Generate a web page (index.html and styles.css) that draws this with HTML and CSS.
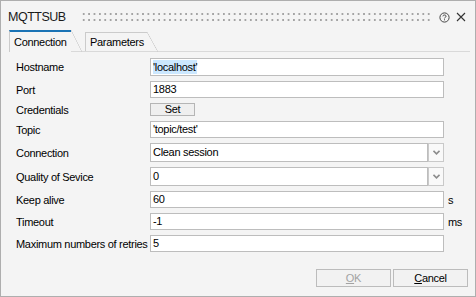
FILE: index.html
```html
<!DOCTYPE html>
<html lang="en">
<head>
    <meta charset="UTF-8">
    <title>MQTTSUB</title>
    <link rel="stylesheet" href="styles.css">
</head>
<body>
    <div class="dialog">
        <!-- Title bar -->
        <div class="titlebar">
            <span class="title">MQTTSUB</span>
            <span class="grip"></span>
            <svg class="help" width="11" height="11" viewBox="0 0 11 11">
                <circle cx="5.5" cy="5.5" r="4.6" fill="none" stroke="#444" stroke-width="1"/>
                <path d="M3.9 4.3 C3.9 2.6 7.1 2.6 7.1 4.2 C7.1 5.3 5.5 5.3 5.5 6.4" fill="none" stroke="#444" stroke-width="1"/>
                <rect x="5" y="7.3" width="1" height="1" fill="#444"/>
            </svg>
            <svg class="close" width="10" height="10" viewBox="0 0 10 10">
                <path d="M1 1 L9 9 M9 1 L1 9" stroke="#333" stroke-width="1.1"/>
            </svg>
        </div>

        <!-- Tabs -->
        <div class="tabs">
            <div class="tab active">Connection</div>
            <div class="tab">Parameters</div>
        </div>

        <div class="panel">
            <div class="form">
                <label class="label">Hostname</label>
                <div class="field h18"><span class="selected">'localhost'</span></div>
                <span></span>

                <label class="label">Port</label>
                <div class="field">1883</div>
                <span></span>

                <label class="label">Credentials</label>
                <div class="cell"><button class="set-btn">Set</button></div>
                <span></span>

                <label class="label">Topic</label>
                <div class="field">'topic/test'</div>
                <span></span>

                <label class="label">Connection</label>
                <div class="combo">
                    <div class="combo-value">Clean session</div>
                    <div class="combo-btn">
                        <svg width="7" height="5" viewBox="0 0 7 5"><path d="M0.5 0.8 L3.5 3.8 L6.5 0.8" fill="none" stroke="#8c8c8c" stroke-width="1.6"/></svg>
                    </div>
                </div>
                <span></span>

                <label class="label">Quality of Sevice</label>
                <div class="combo">
                    <div class="combo-value">0</div>
                    <div class="combo-btn">
                        <svg width="7" height="5" viewBox="0 0 7 5"><path d="M0.5 0.8 L3.5 3.8 L6.5 0.8" fill="none" stroke="#8c8c8c" stroke-width="1.6"/></svg>
                    </div>
                </div>
                <span></span>

                <label class="label">Keep alive</label>
                <div class="field">60</div>
                <span class="unit">s</span>

                <label class="label">Timeout</label>
                <div class="field">-1</div>
                <span class="unit">ms</span>

                <label class="label">Maximum numbers of retries</label>
                <div class="field">5</div>
                <span></span>
            </div>

            <div class="buttons">
                <button class="btn disabled"><u>O</u>K</button>
                <button class="btn"><u>C</u>ancel</button>
            </div>
        </div>
    </div>
</body>
</html>
```

FILE: styles.css
```css
* {
    margin: 0;
    padding: 0;
    box-sizing: border-box;
    font-family: 'Liberation Sans', Arial, sans-serif;
}

body {
    background: #f4f4f4;
}

.dialog {
    width: 476px;
    height: 297px;
    background: #f4f4f4;
    border: 1px solid #aeaeae;
    font-size: 11px;
    letter-spacing: -0.3px;
    color: #000;
}

/* Title bar */
.titlebar {
    height: 30px;
    display: flex;
    align-items: center;
    padding: 2px 0 0 7px;
}

.title {
    font-size: 12.5px;
    letter-spacing: -0.5px;
    color: #1a1a1a;
}

.grip {
    flex: 1;
    height: 8px;
    margin: 0 9px 0 15px;
    background-image: radial-gradient(circle, #a4a4a4 0.9px, transparent 1.1px);
    background-size: 5.4px 6px;
    background-position: 0 -2px;
}

.help {
    margin-right: 6px;
}

.close {
    margin-right: 9px;
}

/* Tabs */
.tabs {
    display: flex;
    align-items: flex-end;
    height: 21px;
    margin: 0 5px 0 8px;
    border-bottom: 1px solid #d9d9d9;
}

.tab {
    position: relative;
    width: 62px;
    height: 19px;
    padding: 3px 0 0 4px;
    border-top: 1px solid #cbcbcb;
    border-left: 1px solid #cbcbcb;
    color: #000;
}

.tab::after {
    content: '';
    position: absolute;
    top: -1px;
    right: -11px;
    width: 11px;
    height: 20px;
    background: linear-gradient(to top right, transparent calc(50% - 0.6px), #cbcbcb, transparent calc(50% + 0.6px));
}

.tab.active {
    height: 22px;
    margin-bottom: -1px;
    padding-top: 4px;
    border-top: 2px solid #1a73b5;
    background: #f4f4f4;
}

.tab.active::after {
    top: -2px;
    height: 22px;
}

.tab + .tab {
    margin-left: 14px;
    width: 62px;
}

/* Form */
.panel {
    padding: 6px 7px 0 15px;
}

.form {
    display: grid;
    grid-template-columns: 134px 294px auto;
    row-gap: 5px;
    align-items: center;
}

.label {
    white-space: nowrap;
}

.field {
    height: 17px;
    line-height: 15px;
    padding-left: 2px;
    background: #fff;
    border: 1px solid #bdbdbd;
    white-space: nowrap;
}

.field.h18 {
    height: 18px;
    line-height: 16px;
}

.selected {
    background: #cce8ff;
    padding: 1px 0;
}

.cell {
    display: flex;
}

.set-btn {
    width: 45px;
    height: 13px;
    font-size: 11px;
    line-height: 11px;
    letter-spacing: -0.3px;
    background: #efefef;
    border: 1px solid #b5b5b5;
    color: #000;
}

.combo {
    display: flex;
    height: 19px;
}

.combo-value {
    flex: 1;
    line-height: 17px;
    padding-left: 2px;
    background: #fff;
    border: 1px solid #bdbdbd;
}

.combo-btn {
    width: 16px;
    background: #f9f9f9;
    border: 1px solid #c9c9c9;
    display: flex;
    justify-content: center;
    align-items: center;
}

.unit {
    padding-left: 4px;
}

/* Dialog buttons */
.buttons {
    display: flex;
    justify-content: flex-end;
    gap: 2px;
    margin-top: 17px;
}

.btn {
    width: 75px;
    height: 18px;
    font-size: 11px;
    letter-spacing: -0.3px;
    background: #f2f2f2;
    border: 1px solid #bcbcbc;
    color: #000;
}

.btn.disabled {
    color: #a3a3a3;
}
```
